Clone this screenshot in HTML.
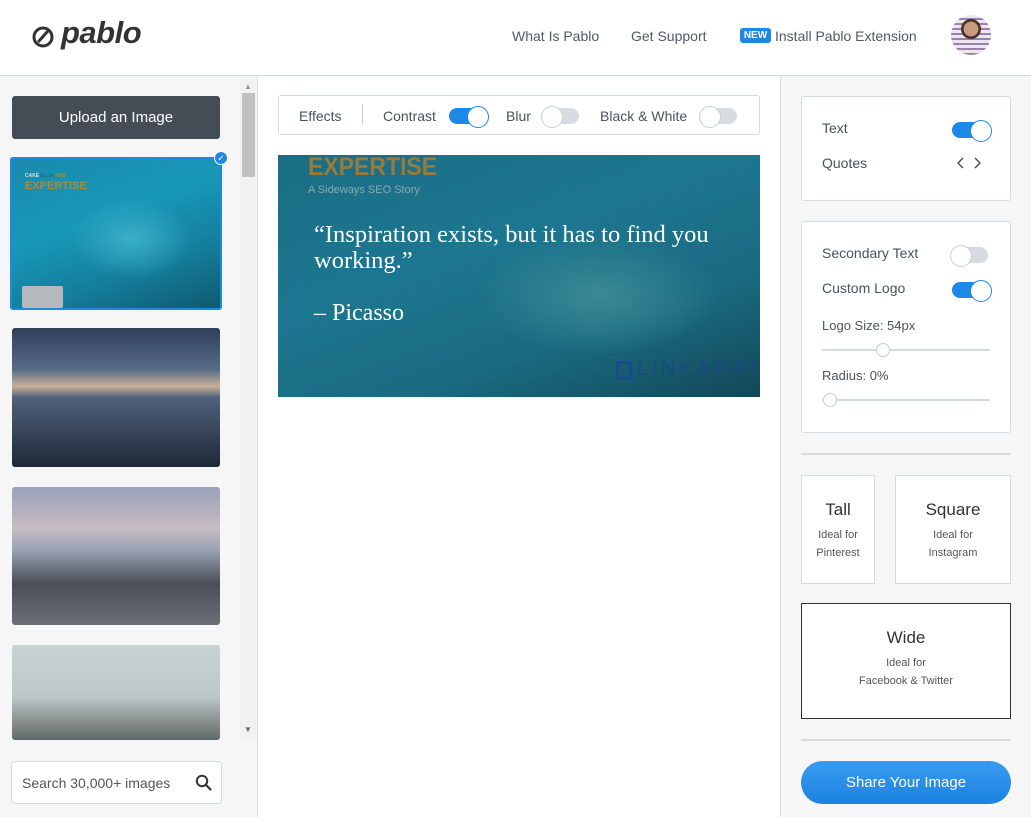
<!DOCTYPE html>
<html><head><style>
*{box-sizing:border-box;margin:0;padding:0}
body{width:1031px;height:817px;overflow:hidden;font-family:"Liberation Sans",sans-serif;color:#3d4450;background:#fff;position:relative}
.abs{position:absolute}
.hdr{left:0;top:0;width:1031px;height:76px;border-bottom:1px solid #d5dbe1;background:#fff}
.nav{font-size:14px;color:#505a66;top:28px}
.left{left:0;top:76px;width:258px;height:741px;background:#f6f6f7;border-right:1px solid #dde1e5}
.right{left:780px;top:76px;width:251px;height:741px;background:#f6f6f7;border-left:1px solid #dde1e5}
.box{background:#fff;border:1px solid #d5dbe1;border-radius:3px}
.tog{width:36px;height:16px;border-radius:8px;background:#d7dce1;position:absolute}
.tog.on{background:#1e88e5}
.tog::after{content:"";position:absolute;top:-2px;width:20px;height:20px;border-radius:50%;background:#fff;border:1px solid #c8cdd2;left:-2px}
.tog.on::after{left:18px;border-color:#1e88e5}
.lbl{font-size:14px;color:#4a525c}
.thumb{left:12px;width:208px;border-radius:3px}
</style></head><body>
<div class="abs hdr"></div>
<svg class="abs" style="left:31px;top:23px" width="26" height="26" viewBox="0 0 26 26"><circle cx="12" cy="14" r="9" fill="none" stroke="#333" stroke-width="3"/><path d="M8 18 L16 9" stroke="#333" stroke-width="3" stroke-linecap="round"/></svg>
<div class="abs" style="left:61px;top:15px;font-size:31px;font-style:italic;color:#333;letter-spacing:-0.5px;font-weight:bold">pablo</div>
<div class="abs nav" style="left:512px">What Is Pablo</div>
<div class="abs nav" style="left:631px">Get Support</div>
<div class="abs" style="left:740px;top:28px;width:31px;height:15px;background:#1e88e5;border-radius:3px;color:#fff;font-size:10px;font-weight:bold;text-align:center;line-height:15px">NEW</div>
<div class="abs nav" style="left:775px">Install Pablo Extension</div>
<div class="abs" style="left:951px;top:15px;width:40px;height:40px;border-radius:50%;background:radial-gradient(circle at 50% 35%,#c89a80 0 22%,#4a3428 23% 30%,transparent 31%),repeating-linear-gradient(180deg,#ece6ee 0 3px,#9a80b0 3px 5px);background-color:#cdd1d0"></div>

<div class="abs left"></div>
<div class="abs" style="left:240px;top:76px;width:17px;height:664px;background:#f1f1f1"></div>
<div class="abs" style="left:242px;top:93px;width:13px;height:84px;background:#c1c1c1"></div>
<div class="abs" style="left:244px;top:82px;font-size:8px;color:#999">▲</div>
<div class="abs" style="left:244px;top:725px;font-size:8px;color:#666">▼</div>
<div class="abs" style="left:12px;top:96px;width:208px;height:43px;background:#444c56;border-radius:3px;color:#fff;font-size:15px;text-align:center;line-height:43px">Upload an Image</div>
<div class="abs thumb" style="left:10px;top:157px;width:212px;height:153px;border:2px solid #1e88e5;background:radial-gradient(ellipse 60px 40px at 120px 80px,#3ab0c8,transparent),linear-gradient(160deg,#1a8aac 0%,#1898b8 40%,#147e9c 70%,#0f5a70 100%)">
<div style="position:absolute;left:13px;top:14px;font-size:5px;color:#ddd;font-weight:bold">CAKE <span style="color:#1a7090">ELSA</span> <span style="color:#b8862a">AND</span></div>
<div style="position:absolute;left:13px;top:21px;font-size:11px;color:#b8862a;font-weight:bold">EXPERTISE</div>
<div style="position:absolute;left:10px;top:127px;width:41px;height:22px;background:#b5b9bd;border-radius:2px"></div>
</div>
<div class="abs" style="left:214px;top:151px;width:14px;height:14px;border-radius:50%;background:#1e88e5;border:1px solid #fff;color:#fff;font-size:9px;text-align:center;line-height:12px">✓</div>
<div class="abs thumb" style="top:328px;height:139px;background:linear-gradient(180deg,#2d3f5a 0%,#5a6d88 30%,#c8b098 42%,#50607a 50%,#1e2838 100%)"></div>
<div class="abs thumb" style="top:487px;height:138px;background:linear-gradient(180deg,#9aa0b8 0%,#c8bcc4 30%,#9aa4b4 45%,#4a4e58 70%,#6a6e76 100%)"></div>
<div class="abs thumb" style="top:645px;height:95px;background:linear-gradient(180deg,#c8d4d4 0%,#bcc8c8 55%,#8a9090 80%,#606868 100%)"></div>
<div class="abs" style="left:0;top:740px;width:257px;height:77px;background:#f6f6f7"></div>
<div class="abs box" style="left:11px;top:761px;width:211px;height:43px;border-radius:4px"></div>
<div class="abs" style="left:22px;top:775px;font-size:14px;color:#555">Search 30,000+ images</div>
<svg class="abs" style="left:195px;top:774px" width="17" height="17" viewBox="0 0 17 17"><circle cx="7" cy="7" r="5.2" fill="none" stroke="#333" stroke-width="2"/><path d="M11 11 L15.5 15.5" stroke="#333" stroke-width="2.2" stroke-linecap="round"/></svg>

<div class="abs box" style="left:278px;top:95px;width:482px;height:40px"></div>
<div class="abs lbl" style="left:299px;top:108px">Effects</div>
<div class="abs" style="left:362px;top:104px;width:1px;height:20px;background:#ccc"></div>
<div class="abs lbl" style="left:383px;top:108px">Contrast</div>
<div class="tog on" style="left:449px;top:108px"></div>
<div class="abs lbl" style="left:506px;top:108px">Blur</div>
<div class="tog" style="left:543px;top:108px"></div>
<div class="abs lbl" style="left:600px;top:108px">Black &amp; White</div>
<div class="tog" style="left:701px;top:108px"></div>

<div class="abs" style="left:278px;top:155px;width:482px;height:242px;overflow:hidden;background:radial-gradient(ellipse 120px 60px at 320px 140px,#3a8a95,transparent),linear-gradient(160deg,#1a6d85 0%,#1d7790 40%,#1a6a80 70%,#124858 100%)">
<div style="position:absolute;left:30px;top:-2px;font-size:25px;font-weight:bold;color:#9a7a38;transform:scaleX(0.92);transform-origin:left">EXPERTISE</div>
<div style="position:absolute;left:30px;top:29px;font-size:11px;color:#8aa8b0">A Sideways SEO Story</div>
<div style="position:absolute;left:36px;top:67px;width:440px;font-family:'Liberation Serif',serif;font-size:24.5px;line-height:26px;color:#fff">“Inspiration exists, but it has to find you working.”</div>
<div style="position:absolute;left:36px;top:145px;font-family:'Liberation Serif',serif;font-size:24px;color:#fff">– Picasso</div>
<div style="position:absolute;left:338px;top:206px;width:16px;height:19px;border:3px solid #1a4a90"></div>
<div style="position:absolute;left:359px;top:202px;font-size:21px;color:#1a4a80;letter-spacing:3px">LINKARATI</div>
</div>

<div class="abs right"></div>
<div class="abs box" style="left:801px;top:96px;width:210px;height:105px"></div>
<div class="abs lbl" style="left:822px;top:120px">Text</div>
<div class="tog on" style="left:952px;top:122px"></div>
<div class="abs lbl" style="left:822px;top:155px">Quotes</div>
<svg class="abs" style="left:957px;top:156px" width="24" height="14" viewBox="0 0 24 14"><path d="M6 2 L1 7 L6 12 M18 2 L23 7 L18 12" fill="none" stroke="#444" stroke-width="1.3"/></svg>
<div class="abs box" style="left:801px;top:221px;width:210px;height:212px"></div>
<div class="abs lbl" style="left:822px;top:245px">Secondary Text</div>
<div class="tog" style="left:952px;top:247px"></div>
<div class="abs lbl" style="left:822px;top:280px">Custom Logo</div>
<div class="tog on" style="left:952px;top:282px"></div>
<div class="abs" style="left:822px;top:318px;font-size:13px;color:#4a525c">Logo Size: 54px</div>
<div class="abs" style="left:822px;top:349px;width:168px;height:2px;background:#d5dbe1"></div>
<div class="abs" style="left:876px;top:343px;width:14px;height:14px;border-radius:50%;background:#fff;border:1px solid #c5cbd0"></div>
<div class="abs" style="left:822px;top:368px;font-size:13px;color:#4a525c">Radius: 0%</div>
<div class="abs" style="left:822px;top:399px;width:168px;height:2px;background:#d5dbe1"></div>
<div class="abs" style="left:823px;top:393px;width:14px;height:14px;border-radius:50%;background:#fff;border:1px solid #c5cbd0"></div>
<div class="abs" style="left:801px;top:453px;width:210px;height:2px;background:#d5dbe1"></div>
<div class="abs" style="left:801px;top:475px;width:74px;height:109px;background:#fff;border:1px solid #d5dbe1;text-align:center">
<div style="font-size:17px;margin-top:24px;color:#333">Tall</div><div style="font-size:11px;line-height:18px;margin-top:6px;color:#555">Ideal for<br>Pinterest</div></div>
<div class="abs" style="left:895px;top:475px;width:116px;height:109px;background:#fff;border:1px solid #d5dbe1;text-align:center">
<div style="font-size:17px;margin-top:24px;color:#333">Square</div><div style="font-size:11px;line-height:18px;margin-top:6px;color:#555">Ideal for<br>Instagram</div></div>
<div class="abs" style="left:801px;top:603px;width:210px;height:116px;background:#fff;border:1px solid #333;text-align:center">
<div style="font-size:17px;margin-top:24px;color:#333">Wide</div><div style="font-size:11px;line-height:18px;margin-top:6px;color:#555">Ideal for<br>Facebook &amp; Twitter</div></div>
<div class="abs" style="left:801px;top:739px;width:210px;height:2px;background:#d5dbe1"></div>
<div class="abs" style="left:801px;top:761px;width:210px;height:43px;border-radius:22px;background:linear-gradient(180deg,#3a9cf0,#1a82e0);color:#fff;font-size:15px;text-align:center;line-height:43px">Share Your Image</div>
</body></html>
